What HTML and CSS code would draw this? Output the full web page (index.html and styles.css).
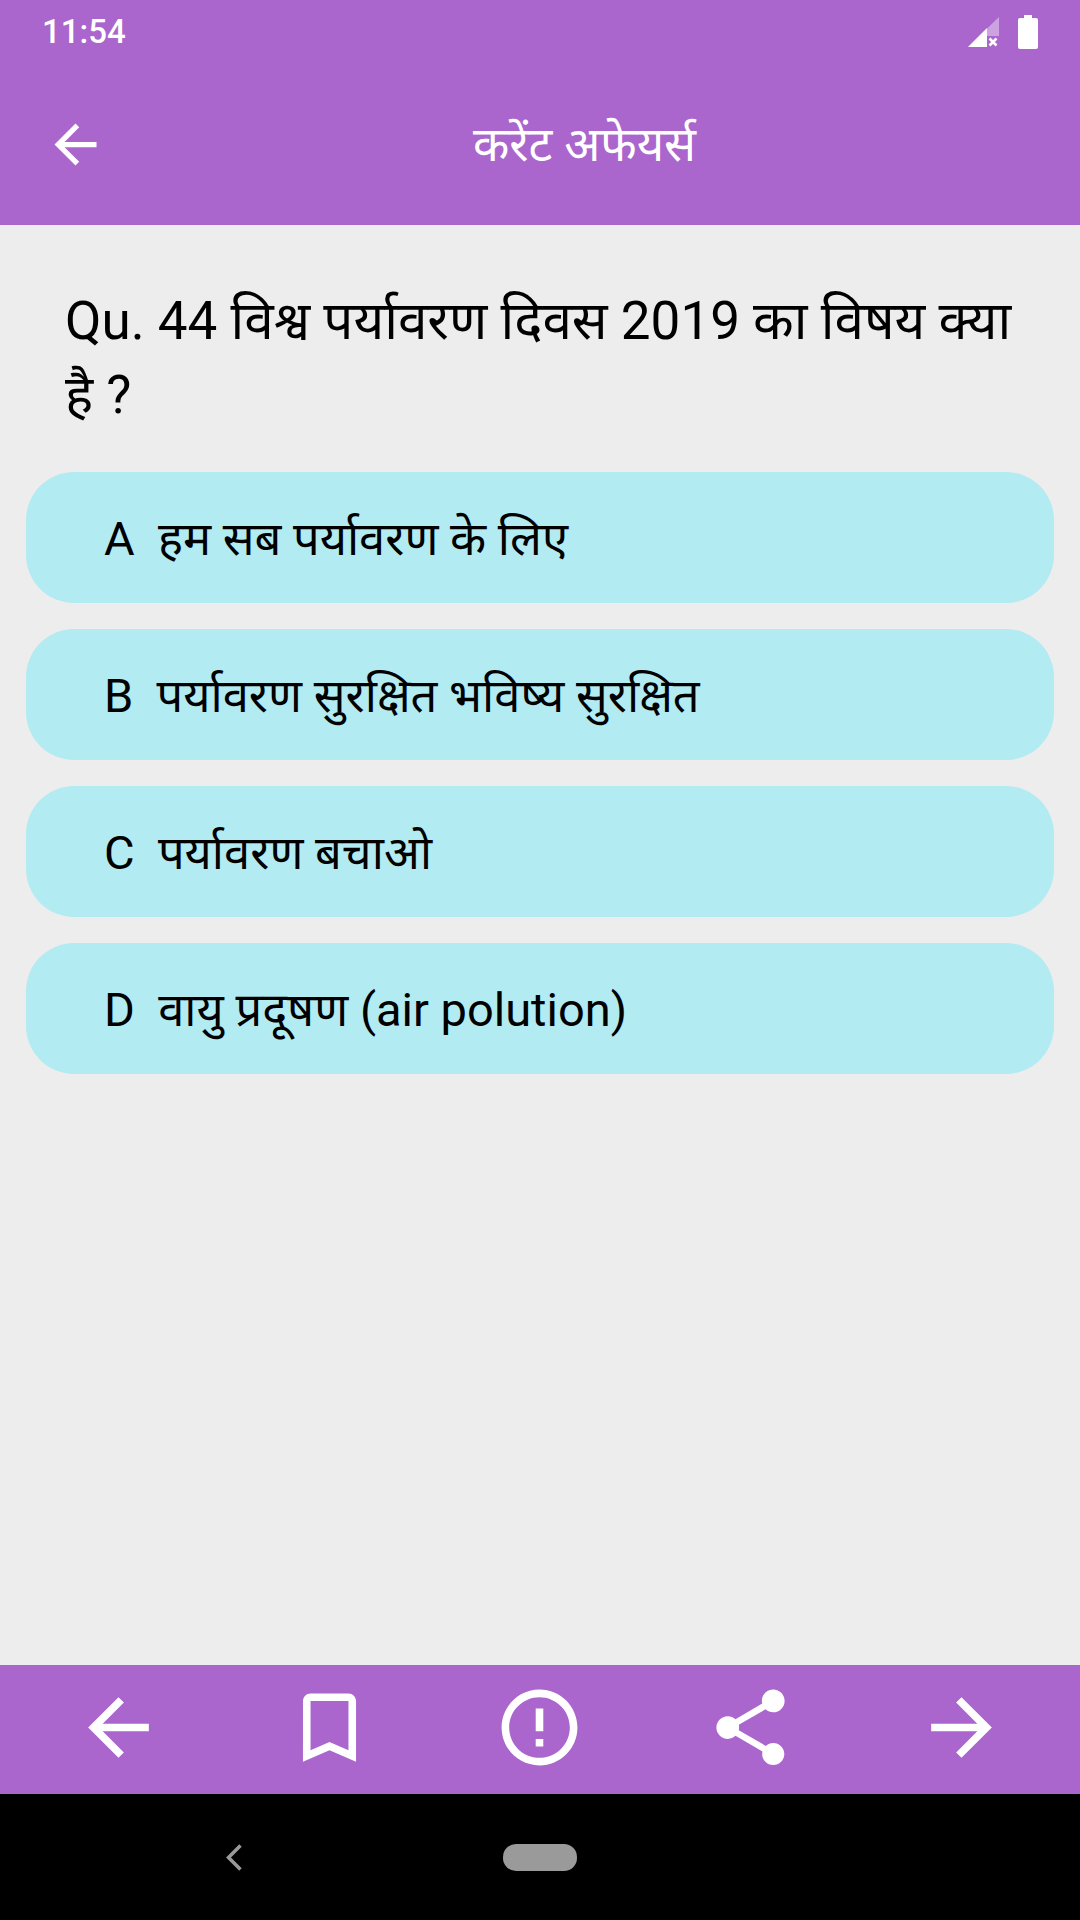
FILE: index.html
```html
<!DOCTYPE html>
<html lang="hi">

<head>
    <meta charset="UTF-8">
    <meta name="viewport" content="width=device-width, initial-scale=1.0">
    <title>करेंट अफेयर्स</title>
    <link rel="stylesheet" href="styles.css">
</head>

<body>
    <div id="page">
        <header id="top">
            <div class="status">
                <span class="time">11:54</span>
                <div class="status-icons">
                    <svg class="signal" width="32" height="32" viewBox="0 0 32 32">
                        <path d="M31 1V20H19V31H0Z" fill="#fff" opacity="0.4"/>
                        <path d="M19 12V31H0Z" fill="#fff"/>
                        <path d="M21.5 22.5l7 7M28.500 22.500l-7 7" stroke="#fff" stroke-width="2.600" fill="none"/>
                    </svg>
                    <svg class="battery" width="20" height="34" viewBox="0 0 20 34">
                        <path d="M6 0h8v3h4a2 2 0 0 1 2 2v27a2 2 0 0 1-2 2H2a2 2 0 0 1-2-2V5a2 2 0 0 1 2-2h4z" fill="#fff"/>
                    </svg>
                </div>
            </div>
            <div class="toolbar">
                <svg class="back" width="63" height="63" viewBox="0 0 24 24">
                    <path d="M20 11H7.830l5.590-5.590L12 4l-8 8 8 8 1.410-1.410L7.830 13H20v-2z" fill="#fff"/>
                </svg>
                <h1 class="title">करेंट अफेयर्स</h1>
            </div>
        </header>

        <main id="quiz">
            <p class="question">Qu. 44 विश्व पर्यावरण दिवस 2019 का विषय क्या है ?</p>
            <ul class="options">
                <li>A&nbsp; हम सब पर्यावरण के लिए</li>
                <li>B&nbsp; पर्यावरण सुरक्षित भविष्य सुरक्षित</li>
                <li>C&nbsp; पर्यावरण बचाओ</li>
                <li>D&nbsp; वायु प्रदूषण (air polution)</li>
            </ul>
        </main>

        <footer id="actions">
            <span class="action">
                <svg width="91" height="91" viewBox="0 0 24 24"><path d="M20 11H7.830l5.590-5.590L12 4l-8 8 8 8 1.410-1.410L7.830 13H20v-2z"/></svg>
            </span>
            <span class="action">
                <svg width="91" height="91" viewBox="0 0 24 24"><path d="M17 3H7c-1.100 0-1.990.9-1.990 2L5 21l7-3 7 3V5c0-1.100-.9-2-2-2zm0 15l-5-2.180L7 18V5h10v13z"/></svg>
            </span>
            <span class="action">
                <svg width="91" height="91" viewBox="0 0 24 24"><path d="M11 15h2v2h-2zm0-8h2v6h-2zm.99-5C6.470 2 2 6.480 2 12s4.470 10 9.990 10C17.520 22 22 17.520 22 12S17.520 2 11.990 2zM12 20c-4.420 0-8-3.580-8-8s3.580-8 8-8 8 3.580 8 8-3.580 8-8 8z"/></svg>
            </span>
            <span class="action">
                <svg width="91" height="91" viewBox="0 0 24 24"><path d="M18 16.080c-.76 0-1.440.3-1.960.77L8.910 12.700c.05-.23.09-.46.09-.7s-.04-.47-.09-.7l7.050-4.110c.54.5 1.250.81 2.040.81 1.660 0 3-1.340 3-3s-1.340-3-3-3-3 1.340-3 3c0 .24.04.47.09.7L8.040 9.810C7.500 9.310 6.790 9 6 9c-1.660 0-3 1.340-3 3s1.340 3 3 3c.79 0 1.500-.31 2.040-.81l7.120 4.160c-.05.21-.08.43-.08.65 0 1.610 1.310 2.920 2.920 2.920 1.610 0 2.920-1.310 2.920-2.920s-1.310-2.920-2.920-2.920z"/></svg>
            </span>
            <span class="action">
                <svg width="91" height="91" viewBox="0 0 24 24"><path d="M4 11h12.170l-5.590-5.590L12 4l8 8-8 8-1.410-1.410L16.170 13H4v-2z"/></svg>
            </span>
        </footer>

        <nav id="navbar">
            <svg class="nav-back" width="16" height="27" viewBox="0 0 16 27">
                <path d="M14.500 1.500L2.500 13.500l12 12" stroke="#9a9a9a" stroke-width="3.500" fill="none"/>
            </svg>
            <span class="nav-pill"></span>
        </nav>
    </div>
</body>

</html>
```

FILE: styles.css
```css
* {
    margin: 0;
    padding: 0;
    box-sizing: border-box;
}

li {
    list-style: none;
}

body {
    font-family: Roboto, "Noto Sans Devanagari", "Noto Sans", "Noto Sans CJK SC", sans-serif;
    background: #ededed;
}

#page {
    width: 1080px;
    height: 1920px;
    display: flex;
    flex-direction: column;
    overflow: hidden;
}

#top {
    height: 225px;
    background: #aa66cc;
    color: #fff;
}

.status {
    height: 63px;
    padding: 0 42px 0 42px;
    display: flex;
    align-items: center;
    justify-content: space-between;
}

.time {
    font-size: 33px;
    font-weight: 500;
}

.status-icons {
    display: flex;
    align-items: center;
    gap: 18px;
}

.toolbar {
    height: 162px;
    padding: 0 0 0 44px;
    display: flex;
    align-items: center;
}

.back {
    flex: none;
}

.title {
    flex: 1;
    padding: 8px 18px 0 0;
    text-align: center;
    font-size: 47.250px;
    font-weight: 400;
}

#quiz {
    flex: 1;
    padding: 0 26px;
}

.question {
    padding: 60px 38px 0 39px;
    font-size: 53px;
    line-height: 73.500px;
    color: #000;
}

.options {
    margin-top: 40px;
    display: flex;
    flex-direction: column;
    gap: 26px;
}

.options li {
    height: 131px;
    padding: 10px 78px 0;
    display: flex;
    align-items: center;
    background: #b2ebf2;
    border-radius: 48px;
    font-size: 47px;
    color: #000;
    white-space: pre;
}

#actions {
    height: 129px;
    padding: 0 13px 4px;
    background: #aa66cc;
    display: flex;
    align-items: center;
}

.action {
    flex: 1;
    display: flex;
    justify-content: center;
}

.action svg {
    fill: #fff;
}

#navbar {
    height: 126px;
    background: #000;
    display: flex;
    align-items: center;
    padding: 0 0 0 226px;
}

.nav-pill {
    width: 74px;
    height: 27px;
    margin-left: 261px;
    background: #9a9a9a;
    border-radius: 13px;
}
```
